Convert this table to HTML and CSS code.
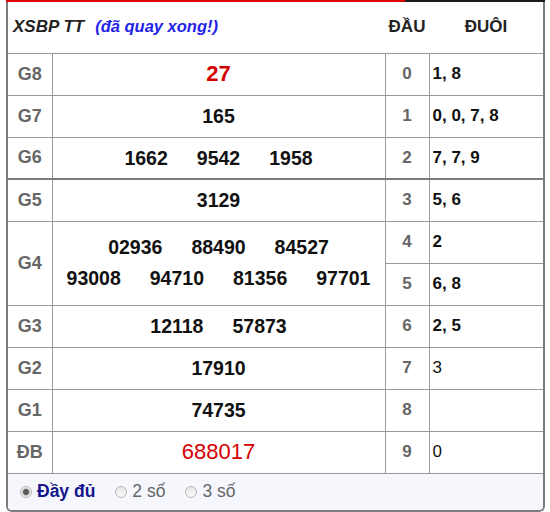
FILE: index.html
```html
<!DOCTYPE html>
<html lang="vi">
<head>
<meta charset="utf-8">
<link rel="stylesheet" href="styles.css">
</head>
<body>
<div class="wrap">
  <div class="topbar"><span class="seg-red"></span><span class="seg-dark"></span></div>
  <div class="box">
    <table class="kq">
      <colgroup>
        <col class="c-label"><col class="c-num"><col class="c-dau"><col class="c-duoi">
      </colgroup>
      <tr class="head">
        <th colspan="2" class="title">XSBP TT<span class="status">(đã quay xong!)</span></th>
        <th class="hd">ĐẦU</th>
        <th class="hd">ĐUÔI</th>
      </tr>
      <tr>
        <td class="lbl">G8</td>
        <td class="num"><span class="red bold">27</span></td>
        <td class="dau">0</td><td class="duoi">1, 8</td>
      </tr>
      <tr>
        <td class="lbl">G7</td>
        <td class="num"><div class="line"><span>165</span></div></td>
        <td class="dau">1</td><td class="duoi">0, 0, 7, 8</td>
      </tr>
      <tr class="thick">
        <td class="lbl">G6</td>
        <td class="num"><div class="line"><span>1662</span><span>9542</span><span>1958</span></div></td>
        <td class="dau">2</td><td class="duoi">7, 7, 9</td>
      </tr>
      <tr>
        <td class="lbl">G5</td>
        <td class="num"><div class="line"><span>3129</span></div></td>
        <td class="dau">3</td><td class="duoi">5, 6</td>
      </tr>
      <tr>
        <td class="lbl" rowspan="2">G4</td>
        <td class="num" rowspan="2">
          <div class="line g4"><span>02936</span><span>88490</span><span>84527</span></div>
          <div class="line g4"><span>93008</span><span>94710</span><span>81356</span><span>97701</span></div>
        </td>
        <td class="dau">4</td><td class="duoi">2</td>
      </tr>
      <tr>
        <td class="dau">5</td><td class="duoi">6, 8</td>
      </tr>
      <tr>
        <td class="lbl">G3</td>
        <td class="num"><div class="line"><span>12118</span><span>57873</span></div></td>
        <td class="dau">6</td><td class="duoi">2, 5</td>
      </tr>
      <tr>
        <td class="lbl">G2</td>
        <td class="num"><div class="line"><span>17910</span></div></td>
        <td class="dau">7</td><td class="duoi thin">3</td>
      </tr>
      <tr>
        <td class="lbl">G1</td>
        <td class="num"><div class="line"><span>74735</span></div></td>
        <td class="dau">8</td><td class="duoi"></td>
      </tr>
      <tr class="last">
        <td class="lbl">ĐB</td>
        <td class="num"><span class="red">688017</span></td>
        <td class="dau">9</td><td class="duoi thin">0</td>
      </tr>
    </table>
    <div class="foot">
      <label class="opt active"><input type="radio" name="mode" checked><span>Đầy đủ</span></label>
      <label class="opt"><input type="radio" name="mode"><span>2 số</span></label>
      <label class="opt"><input type="radio" name="mode"><span>3 số</span></label>
    </div>
  </div>
</div>
</body>
</html>
```

FILE: styles.css
```css
* { box-sizing: border-box; }
html, body { margin: 0; padding: 0; background: #fff; }
body { font-family: "Liberation Sans", Arial, sans-serif; color: #111; }

.wrap { margin-left: 6px; width: 539px; }

.topbar { display: flex; height: 2px; }
.seg-red { width: 399px; background: #e00000; }
.seg-dark { flex: 1; background: #1a1a1a; }

.box {
  border: 2px solid #7c7c7c;
  border-top: none;
  border-radius: 0 0 6px 6px;
  overflow: hidden;
}

.kq {
  width: 535px;
  border-collapse: collapse;
  table-layout: fixed;
}
.c-label { width: 44px; }
.c-num { width: 333px; }
.c-dau { width: 44px; }
.c-duoi { width: 114px; }

.kq td {
  border-right: 1px solid #999;
  border-bottom: 1px solid #999;
  height: 42px;
  padding: 0;
  vertical-align: middle;
}
.kq td.duoi { border-right: none; }

.head th {
  height: 51px;
  border-bottom: 1px solid #999;
  font-size: 17px;
  font-weight: bold;
  color: #222;
  padding: 0;
}
.title {
  text-align: left;
  padding-left: 5px !important;
  font-style: italic;
}
.status {
  color: #2323e8;
  font-size: 16.5px;
  margin-left: 11px;
}
.hd { text-align: center; }

.lbl {
  text-align: center;
  font-size: 18px;
  font-weight: bold;
  color: #666;
}
.num {
  text-align: center;
  font-size: 19.5px;
  font-weight: bold;
  color: #111;
}
.line {
  display: flex;
  justify-content: center;
  gap: 29px;
  line-height: 24px;
}
.line.g4 { line-height: 31px; }
.red { color: #d40000; font-size: 22px; font-weight: normal; }
.red.bold { font-weight: bold; }

.dau {
  text-align: center;
  font-size: 17px;
  font-weight: bold;
  color: #666;
}
.duoi {
  text-align: left;
  padding-left: 3px !important;
  font-size: 17px;
  font-weight: bold;
  color: #111;
}
.duoi.thin { font-weight: normal; }

.kq tr.thick td { border-bottom: 2px solid #7c7c7c; }

.foot {
  height: 36px;
  background: #f5f7fd;
  display: flex;
  align-items: center;
  padding-left: 12px;
  gap: 20px;
}
.opt {
  display: flex;
  align-items: center;
  gap: 5px;
  font-size: 17.5px;
  color: #666;
}
.opt.active { color: #14148a; font-weight: bold; }
.opt input {
  appearance: none;
  -webkit-appearance: none;
  margin: 0;
  width: 12px;
  height: 12px;
  border-radius: 50%;
  border: 1px solid #b8b8b8;
  background: linear-gradient(#e6e6e6, #fafafa);
}
.opt input:checked {
  background: radial-gradient(circle, #5a5a5a 0 2.5px, #cfcfcf 3.5px, #f2f2f2 5px);
}
```
